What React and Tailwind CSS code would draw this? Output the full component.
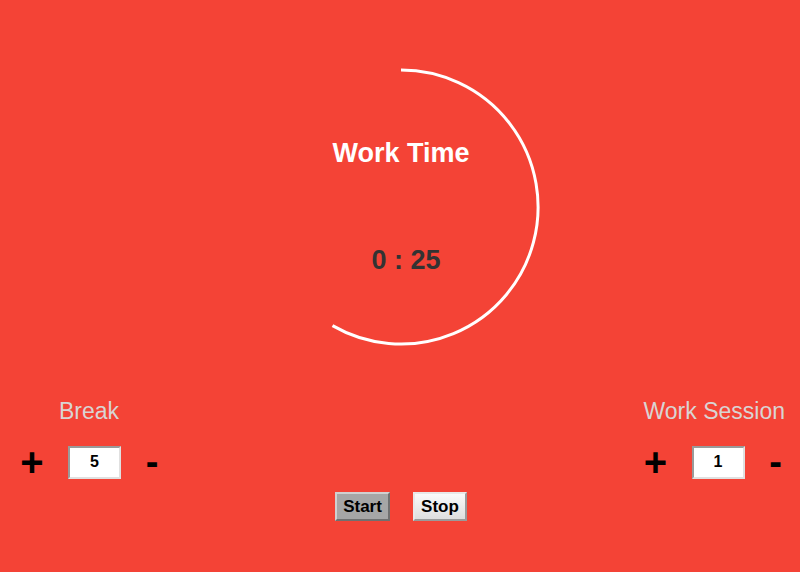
import React, { useState } from 'react';

function Counter({ label, value, onInc, onDec, labelClass }) {
  return (
    <div className="flex flex-col">
      <div className={`h-[24px] flex items-center text-[23px] text-[#d9d4d3] ${labelClass}`}>{label}</div>
      <div className="flex items-center mt-[22px]">
        <button onClick={onInc} className="w-[24px] h-[34px] flex items-center justify-center text-[40px] font-bold text-black leading-none">+</button>
        <input
          readOnly
          value={value}
          className="ml-[24px] w-[53px] h-[33px] bg-white text-center text-[16px] font-bold text-black border-2 border-t-[#9a9a9a] border-l-[#9a9a9a] border-b-[#e0e0e0] border-r-[#e0e0e0] outline-none"
        />
        <button onClick={onDec} className="ml-[24px] w-[14px] h-[34px] flex items-center justify-center text-[38px] font-bold text-black leading-none">-</button>
      </div>
    </div>
  );
}

export default function App() {
  const [brk, setBrk] = useState(5);
  const [session, setSession] = useState(1);

  return (
    <div className="min-h-screen bg-[#f44336] flex flex-col font-['Liberation_Sans',Arial,sans-serif] overflow-hidden">
      {/* timer circle */}
      <div className="relative mt-[67px] ml-[261px] w-[280px] h-[280px] flex flex-col items-center">
        <svg className="absolute inset-0" width="280" height="280" viewBox="0 0 280 280">
          <path d="M140 3 A137 137 0 1 1 71.5 258.6" fill="none" stroke="#ffffff" strokeWidth="3" />
        </svg>
        <div className="relative mt-[73px] text-[27px] font-bold text-white leading-none">Work Time</div>
        <div className="relative mt-[80px] ml-[10px] text-[27px] font-bold text-[#333333] leading-none">0 : 25</div>
      </div>

      {/* settings row */}
      <div className="flex justify-between mt-[52px] pl-[20px] pr-[15px]">
        <Counter label="Break" value={brk} labelClass="pl-[39px]" onInc={() => setBrk(brk + 1)} onDec={() => setBrk(Math.max(1, brk - 1))} />
        <Counter label="Work Session" value={session} labelClass="" onInc={() => setSession(session + 1)} onDec={() => setSession(Math.max(1, session - 1))} />
      </div>

      {/* controls */}
      <div className="flex justify-center gap-[23px] mt-[13px] pl-[2px]">
        <button className="w-[55px] h-[29px] bg-[#a6a6a6] text-[17px] font-bold text-black border-2 border-t-[#d0d0d0] border-l-[#d0d0d0] border-b-[#707070] border-r-[#707070]">Start</button>
        <button className="w-[54px] h-[29px] bg-gradient-to-b from-[#fafafa] to-[#dedede] text-[17px] font-bold text-black border-2 border-t-[#e8e8e8] border-l-[#e8e8e8] border-b-[#9a9a9a] border-r-[#9a9a9a]">Stop</button>
      </div>
    </div>
  );
}
